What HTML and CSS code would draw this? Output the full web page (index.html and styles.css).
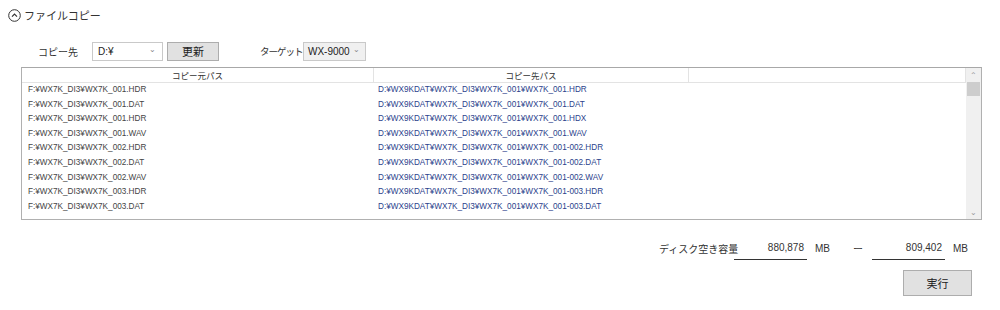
FILE: index.html
```html
<!DOCTYPE html>
<html lang="ja">
<head>
    <meta charset="UTF-8">
    <title>ファイルコピー</title>
    <link rel="stylesheet" href="styles.css">
</head>
<body>
    <div class="section-title">
        <svg class="collapse-icon" width="13" height="13" viewBox="0 0 13 13">
            <circle cx="6.5" cy="6.5" r="5.8" fill="none" stroke="#333" stroke-width="1"/>
            <path d="M4 7.6 L6.5 5.1 L9 7.6" fill="none" stroke="#333" stroke-width="1.2"/>
        </svg>
        <span>ファイルコピー</span>
    </div>

    <div class="toolbar">
        <span class="label label-dest">コピー先</span>
        <div class="combo combo-drive"><span>D:¥</span><span class="arrow">⌄</span></div>
        <button class="btn btn-refresh">更新</button>
        <span class="label label-target">ターゲット</span>
        <div class="combo combo-target"><span>WX-9000</span><span class="arrow">⌄</span></div>
    </div>

    <div class="grid">
        <div class="grid-body">
            <div class="grid-head">
                <div class="cell">コピー元パス</div>
                <div class="cell">コピー先パス</div>
                <div class="cell"></div>
            </div>
            <div class="grid-row"><div class="src">F:¥WX7K_DI3¥WX7K_001.HDR</div><div class="dst">D:¥WX9KDAT¥WX7K_DI3¥WX7K_001¥WX7K_001.HDR</div></div>
            <div class="grid-row"><div class="src">F:¥WX7K_DI3¥WX7K_001.DAT</div><div class="dst">D:¥WX9KDAT¥WX7K_DI3¥WX7K_001¥WX7K_001.DAT</div></div>
            <div class="grid-row"><div class="src">F:¥WX7K_DI3¥WX7K_001.HDR</div><div class="dst">D:¥WX9KDAT¥WX7K_DI3¥WX7K_001¥WX7K_001.HDX</div></div>
            <div class="grid-row"><div class="src">F:¥WX7K_DI3¥WX7K_001.WAV</div><div class="dst">D:¥WX9KDAT¥WX7K_DI3¥WX7K_001¥WX7K_001.WAV</div></div>
            <div class="grid-row"><div class="src">F:¥WX7K_DI3¥WX7K_002.HDR</div><div class="dst">D:¥WX9KDAT¥WX7K_DI3¥WX7K_001¥WX7K_001-002.HDR</div></div>
            <div class="grid-row"><div class="src">F:¥WX7K_DI3¥WX7K_002.DAT</div><div class="dst">D:¥WX9KDAT¥WX7K_DI3¥WX7K_001¥WX7K_001-002.DAT</div></div>
            <div class="grid-row"><div class="src">F:¥WX7K_DI3¥WX7K_002.WAV</div><div class="dst">D:¥WX9KDAT¥WX7K_DI3¥WX7K_001¥WX7K_001-002.WAV</div></div>
            <div class="grid-row"><div class="src">F:¥WX7K_DI3¥WX7K_003.HDR</div><div class="dst">D:¥WX9KDAT¥WX7K_DI3¥WX7K_001¥WX7K_001-003.HDR</div></div>
            <div class="grid-row"><div class="src">F:¥WX7K_DI3¥WX7K_003.DAT</div><div class="dst">D:¥WX9KDAT¥WX7K_DI3¥WX7K_001¥WX7K_001-003.DAT</div></div>
        </div>
        <div class="scrollbar">
            <div class="scroll-btn">⌃</div>
            <div class="scroll-thumb"></div>
            <div class="scroll-track"></div>
            <div class="scroll-btn">⌄</div>
        </div>
    </div>

    <div class="disk">
        <span class="label">ディスク空き容量</span>
        <span class="value">880,878</span>
        <span class="unit">MB</span>
        <span class="to">ー</span>
        <span class="value">809,402</span>
        <span class="unit">MB</span>
    </div>

    <div class="actions">
        <button class="btn btn-run">実行</button>
    </div>
</body>
</html>
```

FILE: styles.css
```css
/* Base */
html, body {
    margin: 0;
    padding: 0;
    background: #ffffff;
    color: #333333;
    font-family: "Noto Sans CJK JP", "Noto Sans", sans-serif;
}

.label {
    white-space: nowrap;
    flex-shrink: 0;
}

/* Section title */
.section-title {
    display: flex;
    align-items: center;
    gap: 3px;
    height: 16px;
    padding: 7px 0 0 8px;
    font-size: 11px;
}

/* Toolbar */
.toolbar {
    display: flex;
    align-items: center;
    height: 20px;
    margin-top: 18px;
    padding-left: 38px;
    font-size: 10px;
}

.label-dest {
    width: 54px;
}

.label-target {
    width: 42px;
    margin: 0 1px 0 41px;
    font-size: 9.5px;
    letter-spacing: -1px;
}

.combo {
    display: flex;
    align-items: center;
    justify-content: space-between;
    flex-shrink: 0;
    box-sizing: border-box;
    height: 19px;
    padding: 0 6px 0 5px;
    border: 1px solid #c9c9c9;
    background: #f0f0f0;
    font-family: "Liberation Sans", Arial, sans-serif;
    font-size: 10px;
    color: #222222;
    white-space: nowrap;
}

.combo .arrow {
    font-size: 8px;
    color: #888888;
    line-height: 8px;
    margin-top: -3px;
}

.combo-drive {
    width: 71px;
    background: #ffffff;
}

.combo-target {
    width: 63px;
    padding: 0 5px 0 4px;
    font-size: 10px;
}

.btn {
    box-sizing: border-box;
    border: 1px solid #adadad;
    background: #e1e1e1;
    color: #222222;
    font-family: "Noto Sans CJK JP", sans-serif;
    padding: 0;
    cursor: pointer;
}

.btn-refresh {
    width: 52px;
    height: 19px;
    margin-left: 4px;
    font-size: 11px;
}

/* Grid */
.grid {
    display: flex;
    box-sizing: border-box;
    width: 961px;
    height: 153px;
    margin: 6px 0 0 21px;
    border: 1px solid #b0b0b0;
    border-top-color: #a8a8a8;
}

.grid-body {
    flex: 1;
}

.grid-head {
    display: grid;
    grid-template-columns: 352px 315px 1fr;
    height: 14px;
    border-bottom: 1px solid #e3e3e3;
    font-size: 8.5px;
    color: #333333;
}

.grid-head .cell {
    text-align: center;
    line-height: 14px;
    border-right: 1px solid #e3e3e3;
}

.grid-row {
    display: grid;
    grid-template-columns: 350px 1fr;
    height: 14.6px;
    line-height: 14.6px;
    padding-left: 6px;
    font-family: "Liberation Sans", Arial, sans-serif;
    font-size: 8.2px;
    white-space: nowrap;
}

.src {
    color: #444444;
}

.dst {
    color: #2c3f8c;
}

.scrollbar {
    display: flex;
    flex-direction: column;
    width: 15px;
    background: #f0f0f0;
}

.scroll-btn {
    height: 14px;
    font-size: 8px;
    line-height: 14px;
    text-align: center;
    color: #9a9a9a;
}

.scroll-thumb {
    height: 14px;
    margin: 0 1px;
    background: #cdcdcd;
}

.scroll-track {
    flex: 1;
}

/* Disk space */
.disk {
    display: flex;
    align-items: center;
    height: 20px;
    margin-top: 18px;
    padding-left: 659px;
    font-size: 10px;
}

.disk .label {
    width: 75px;
}

.value {
    box-sizing: border-box;
    width: 73px;
    height: 18px;
    margin-top: 6px;
    padding-right: 3px;
    border-bottom: 1px solid #333333;
    text-align: right;
    line-height: 12px;
    font-family: "Liberation Sans", Arial, sans-serif;
}

.unit {
    width: 38px;
    margin-left: 8px;
    font-family: "Liberation Sans", Arial, sans-serif;
}

.to {
    width: 19px;
}

/* Actions */
.actions {
    display: flex;
    justify-content: flex-end;
    margin-top: 12px;
    padding-right: 28px;
}

.btn-run {
    width: 69px;
    height: 26px;
    font-size: 11px;
}
```
